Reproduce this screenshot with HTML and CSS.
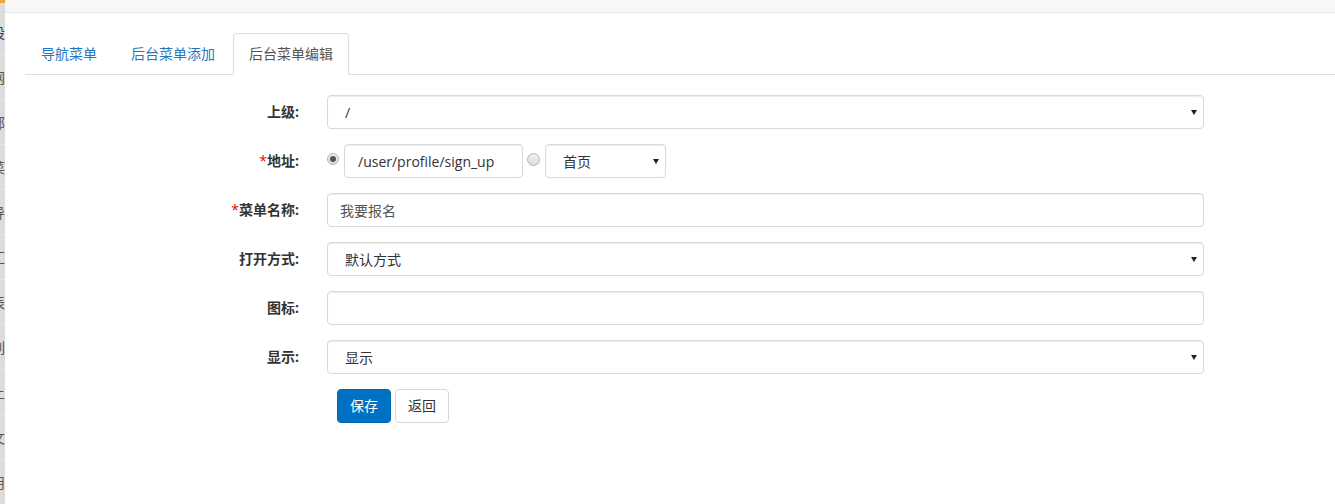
FILE: index.html
```html
<!DOCTYPE html>
<html lang="zh-CN">
<head>
<meta charset="utf-8">
<title>后台菜单编辑</title>
<link rel="stylesheet" href="styles.css">
</head>
<body>
<div class="sidebar">
  <div class="side-top"></div>
  <div class="side-item active"><span>设</span></div>
  <div class="side-item"><span>网</span></div>
  <div class="side-item"><span>邮</span></div>
  <div class="side-item"><span>菜</span></div>
  <div class="side-item"><span>导</span></div>
  <div class="side-item"><span>汇</span></div>
  <div class="side-item"><span>表</span></div>
  <div class="side-item"><span>列</span></div>
  <div class="side-item"><span>上</span></div>
  <div class="side-item"><span>文</span></div>
  <div class="side-item"><span>用</span></div>
</div>
<div class="main">
  <div class="topbar"></div>
  <div class="content">
    <ul class="nav-tabs">
      <li><a href="#">导航菜单</a></li>
      <li><a href="#">后台菜单添加</a></li>
      <li class="active"><a href="#">后台菜单编辑</a></li>
    </ul>
    <form class="form">
      <div class="row">
        <label class="label">上级:</label>
        <div class="select-wrap">
          <select class="control select"><option>/</option></select>
        </div>
      </div>
      <div class="row">
        <label class="label"><span class="req">*</span>地址:</label>
        <div class="inline">
          <input type="radio" name="addr" class="radio" checked>
          <input type="text" class="control addr-input" value="/user/profile/sign_up">
          <input type="radio" name="addr" class="radio radio-second">
          <div class="select-wrap small">
            <select class="control select"><option>首页</option></select>
          </div>
        </div>
      </div>
      <div class="row">
        <label class="label"><span class="req">*</span>菜单名称:</label>
        <input type="text" class="control" value="我要报名">
      </div>
      <div class="row">
        <label class="label">打开方式:</label>
        <div class="select-wrap">
          <select class="control select"><option>默认方式</option></select>
        </div>
      </div>
      <div class="row">
        <label class="label">图标:</label>
        <input type="text" class="control" value="">
      </div>
      <div class="row">
        <label class="label">显示:</label>
        <div class="select-wrap">
          <select class="control select"><option>显示</option></select>
        </div>
      </div>
      <div class="row">
        <span></span>
        <div class="buttons">
          <button type="button" class="btn btn-primary">保存</button>
          <button type="button" class="btn btn-default">返回</button>
        </div>
      </div>
    </form>
  </div>
</div>
</body>
</html>
```
FILE: styles.css
```css
* { box-sizing: border-box; }
html, body { margin: 0; padding: 0; height: 100%; }
body {
  display: flex;
  background: #fff;
  font-family: "Open Sans", "Noto Sans CJK SC", sans-serif;
  font-size: 14px;
  color: #333;
  overflow: hidden;
}
.sidebar {
  width: 5px;
  flex: none;
  background: #dcdcdc;
  overflow: hidden;
}
.side-top {
  height: 10px;
  background: linear-gradient(#f0a43a 0, #f0a43a 3px, #dcdcdc 3px);
}
.side-item {
  height: 45px;
  border-bottom: 1px solid #e6e6e6;
  display: flex;
  align-items: center;
  overflow: hidden;
  white-space: nowrap;
  color: #555;
  font-size: 14px;
}
.side-item span { margin-left: -9px; }
.side-item.active { color: #1a3a70; }
.main { flex: 1; min-width: 0; }
.topbar {
  height: 13px;
  background: #f7f7f7;
  border-bottom: 1px solid #e6e6e6;
}
.content { padding: 20px 0 0 20px; }
.nav-tabs {
  display: flex;
  list-style: none;
  margin: 0;
  padding: 0;
  border-bottom: 1px solid #ddd;
}
.nav-tabs li { margin-right: 2px; margin-bottom: -1px; }
.nav-tabs a {
  display: block;
  padding: 10px 15px;
  line-height: 20px;
  border: 1px solid transparent;
  border-radius: 4px 4px 0 0;
  color: #1f78c1;
  text-decoration: none;
}
.nav-tabs .active a {
  color: #555;
  background: #fff;
  border-color: #ddd;
  border-bottom-color: transparent;
}
.form { margin-top: 20px; }
.row {
  display: grid;
  grid-template-columns: 274px 877px;
  column-gap: 28px;
  align-items: center;
  margin-bottom: 15px;
}
.label {
  text-align: right;
  font-weight: bold;
  color: #333;
  line-height: 20px;
}
.req { color: #e00; font-weight: normal; }
.control {
  display: block;
  width: 100%;
  height: 34px;
  padding: 6px 12px;
  font: inherit;
  font-size: 14px;
  color: #555;
  background: #fff;
  border: 1px solid #d9d9d9;
  border-radius: 4px;
  box-shadow: inset 0 1px 1px rgba(0,0,0,.075);
  outline: none;
}
.select {
  -webkit-appearance: none;
  appearance: none;
  padding-left: 17px;
  color: #333;
}
.select-wrap { position: relative; }
.select-wrap::after {
  content: "";
  position: absolute;
  right: 7px;
  top: 15px;
  border-left: 3px solid transparent;
  border-right: 3px solid transparent;
  border-top: 5px solid #222;
  pointer-events: none;
}
.select-wrap.small { width: 121px; }
.inline { display: flex; align-items: flex-start; }
.radio {
  -webkit-appearance: none;
  appearance: none;
  width: 12px;
  height: 12px;
  margin: 9px 0 0 0;
  border: 1px solid #b5b5b5;
  border-radius: 50%;
  background: linear-gradient(#f2f2f2, #dadada);
  flex: none;
  position: relative;
}
.radio:checked::after {
  content: "";
  position: absolute;
  left: 2px;
  top: 2px;
  width: 6px;
  height: 6px;
  border-radius: 50%;
  background: #555;
}
.inline .radio:first-child { margin-right: 5px; }
.radio-second { width: 13px; height: 13px; }
.addr-input { width: 179px; margin-right: 4px; color: #333; padding-left: 13px; }
.inline .radio + .select-wrap { margin-left: 5px; }
.buttons { display: flex; gap: 4px; padding-left: 10px; }
.btn {
  height: 34px;
  padding: 6px 12px;
  font: inherit;
  font-size: 14px;
  line-height: 20px;
  border: 1px solid #ccc;
  border-radius: 4px;
  cursor: pointer;
}
.btn-primary { background: #0070c2; border-color: #0067b3; color: #fff; }
.btn-default { background: #fff; border-color: #d6d6d6; color: #333; }
```
